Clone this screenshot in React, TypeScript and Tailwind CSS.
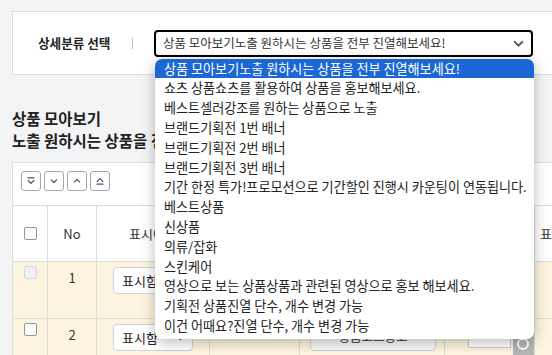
import React from 'react';

const options = [
  '상품 모아보기노출 원하시는 상품을 전부 진열해보세요!',
  '쇼츠 상품쇼츠를 활용하여 상품을 홍보해보세요.',
  '베스트셀러강조를 원하는 상품으로 노출',
  '브랜드기획전 1번 배너',
  '브랜드기획전 2번 배너',
  '브랜드기획전 3번 배너',
  '기간 한정 특가!프로모션으로 기간할인 진행시 카운팅이 연동됩니다.',
  '베스트상품',
  '신상품',
  '의류/잡화',
  '스킨케어',
  '영상으로 보는 상품상품과 관련된 영상으로 홍보 해보세요.',
  '기획전 상품진열 단수, 개수 변경 가능',
  '이건 어때요?진열 단수, 개수 변경 가능',
];

const Chevron: React.FC<{ className?: string }> = ({ className }) => (
  <svg viewBox="0 0 12 12" className={className} fill="none" stroke="currentColor" strokeWidth="1.8" strokeLinecap="round" strokeLinejoin="round">
    <path d="M2.5 4.5 L6 8 L9.5 4.5" />
  </svg>
);

const SortButton: React.FC<{ d: string }> = ({ d }) => (
  <button className="w-[20px] h-[20px] border border-[#a3a9b3] rounded-[3px] bg-white flex items-center justify-center text-[#4b5563]">
    <svg viewBox="0 0 10 10" className="w-[10px] h-[10px]" fill="none" stroke="currentColor" strokeWidth="1.2" strokeLinecap="round" strokeLinejoin="round">
      <path d={d} />
    </svg>
  </button>
);

const Checkbox: React.FC<{ disabled?: boolean }> = ({ disabled }) => (
  <span className={disabled
    ? 'block w-[13px] h-[13px] rounded-[2px] border border-[#d5d8de] bg-[#eef0f4]'
    : 'block w-[13px] h-[13px] rounded-[2px] border border-[#8f959e] bg-white'} />
);

const cols = ['w-[35px]', 'w-[49px]', 'w-[113px]', 'w-[90px]', 'w-[145px]', 'w-[90px]', 'w-[70px]'];

const RowSelect = () => (
  <div className="w-[80px] h-[27px] border border-[#cfd3d9] rounded-[4px] bg-white flex items-center justify-between pl-[8px] pr-[6px] text-[13px] text-[#222]">
    <span>표시함</span>
    <Chevron className="w-[11px] h-[11px] text-[#555]" />
  </div>
);

const DataRow: React.FC<{ no: number; disabled?: boolean }> = ({ no, disabled }) => (
  <div className="flex h-[57px] bg-[#fcf4de] border-b border-[#dcdcdc]">
    <div className={`${cols[0]} border-r border-[#dcdcdc] flex justify-center pt-[4px]`}><Checkbox disabled={disabled} /></div>
    <div className={`${cols[1]} border-r border-[#dcdcdc] flex justify-center pt-[6px] text-[13px] text-[#333]`}>{no}</div>
    <div className={`${cols[2]} border-r border-[#dcdcdc] flex justify-center pt-[5px]`}><RowSelect /></div>
    <div className={`${cols[3]} border-r border-[#dcdcdc]`} />
    <div className={`${cols[4]} border-r border-[#dcdcdc] flex justify-end pr-[8px] pt-[5px]`}>
      <button className="w-[126px] h-[27px] border border-[#cfd3d9] rounded-[4px] bg-[#f7f7f7] text-[12.5px] text-[#333]">상품코드광고</button>
    </div>
    <div className={`${cols[5]} border-r border-[#dcdcdc] flex items-start gap-[2px] pl-[23px] pt-[13px]`}>
      {no === 2 && (
        <>
          <div className="w-[44px] h-[15px] border border-[#c8ccd2] bg-white mt-[1px]" />
          <div className="w-[22px] h-[23px] bg-[#b3b5b8] flex items-center justify-center">
            <span className="block w-[12px] h-[12px] rounded-full border-2 border-white" />
          </div>
        </>
      )}
    </div>
    <div className={`${cols[6]}`} />
  </div>
);

export default function App() {
  return (
    <div className="w-[552px] h-[355px] overflow-hidden bg-[#f3f4f6] font-['Noto_Sans_CJK_KR','Noto_Sans',sans-serif] text-[#222]">
      <div className="w-[720px] pl-3 pt-[11px]">
        {/* category select bar */}
        <div className="h-[64px] border border-[#d9dce1] bg-white flex items-center">
          <span className="ml-[25px] w-[71px] whitespace-nowrap text-[12.6px] font-bold text-[#222]">상세분류 선택</span>
          <span className="ml-[23px] w-px h-[11px] bg-[#b9bcc2]" />
          <div className="relative ml-[21px] w-[379px] h-[27px]">
            <div className="h-full border-2 border-black rounded-[4px] bg-white flex items-center justify-between pl-[7px] pr-[6px] text-[12.5px] text-[#333]">
              <span className="whitespace-nowrap">상품 모아보기노출 원하시는 상품을 전부 진열해보세요!</span>
              <Chevron className="w-[13px] h-[13px] text-[#4b5563]" />
            </div>
            <ul className="absolute z-10 top-[29px] left-px w-[379px] bg-white rounded-[7px] overflow-hidden pb-[3px] shadow-[0_3px_14px_rgba(0,0,0,0.28)]">
              {options.map((o, i) => (
                <li
                  key={o}
                  className={i === 0
                    ? 'h-[19.8px] flex items-center pl-[9px] whitespace-nowrap text-[13.1px] bg-[#1b67d4] text-white'
                    : 'h-[19.8px] flex items-center pl-[9px] whitespace-nowrap text-[13.1px] text-[#222]'}
                >
                  {o}
                </li>
              ))}
            </ul>
          </div>
        </div>

        {/* section title */}
        <div className="mt-[32px] text-[15.5px] font-bold leading-[22px] text-[#222]">
          <p>상품 모아보기</p>
          <p>노출 원하시는 상품을 전부 진열해보세요!</p>
        </div>

        {/* list table */}
        <div className="mt-[11px] border border-[#dcdfe4] bg-white">
          <div className="flex gap-[3px] pl-[8px] pt-[8px] pb-[14px]">
            <SortButton d="M2 1.8 H8 M2.2 4.5 L5 7.3 L7.8 4.5" />
            <SortButton d="M2.3 3.8 L5 6.5 L7.7 3.8" />
            <SortButton d="M2.3 6.2 L5 3.5 L7.7 6.2" />
            <SortButton d="M2.2 5.5 L5 2.7 L7.8 5.5 M2 8.2 H8" />
          </div>
          <div className="border-t border-[#dcdcdc]">
            <div className="flex h-[56px] bg-white border-b border-[#dcdcdc] text-[13px] text-[#333]">
              <div className={`${cols[0]} border-r border-[#dcdcdc] flex items-center justify-center`}><Checkbox /></div>
              <div className={`${cols[1]} border-r border-[#dcdcdc] flex items-center justify-center`}>No</div>
              <div className={`${cols[2]} border-r border-[#dcdcdc] flex items-center justify-center`}>표시여부</div>
              <div className={`${cols[3]} border-r border-[#dcdcdc] flex items-center justify-center`}>이미지</div>
              <div className={`${cols[4]} border-r border-[#dcdcdc] flex items-center justify-center`}>상품정보</div>
              <div className={`${cols[5]} border-r border-[#dcdcdc] flex items-center justify-center`}>진열순서</div>
              <div className={`${cols[6]} flex items-center pl-[5px]`}>표시기간</div>
            </div>
            <DataRow no={1} disabled />
            <DataRow no={2} />
          </div>
        </div>
      </div>
    </div>
  );
}
